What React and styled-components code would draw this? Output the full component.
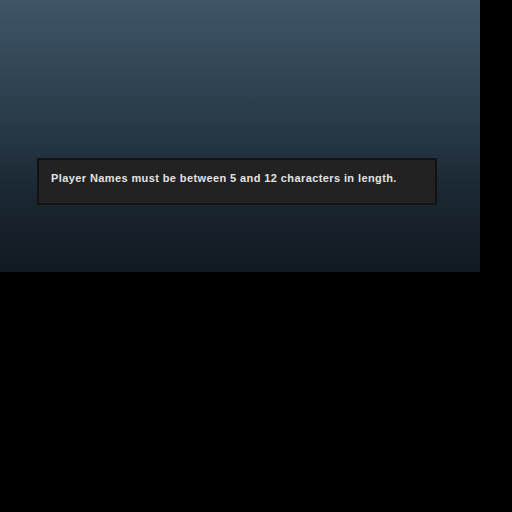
import React from "react";
import styled, { createGlobalStyle } from "styled-components";

const Global = createGlobalStyle`
  html, body { margin: 0; padding: 0; background: #000; }
  body { width: 512px; height: 512px; overflow: hidden; }
`;

const Screen = styled.div`
  width: 480px;
  height: 272px;
  background: linear-gradient(180deg, #3f5667 0%, #2c3e4c 40%, #1b2833 70%, #111820 100%);
  display: flex;
  flex-direction: column;
  padding-top: 158px;
  padding-left: 37px;
  box-sizing: border-box;
`;

const MessageBox = styled.div`
  width: 400px;
  height: 47px;
  box-sizing: border-box;
  background: #222222;
  border: 2px solid #131313;
  display: flex;
  align-items: flex-start;
  padding: 13px 0 0 12px;
`;

const Message = styled.span`
  font-family: "Liberation Sans", Arial, sans-serif;
  font-weight: bold;
  font-size: 11px;
  line-height: 11px;
  letter-spacing: 0.4px;
  color: #e2e2e2;
`;

export default function App() {
  return (
    <>
      <Global />
      <Screen>
        <MessageBox>
          <Message>Player Names must be between 5 and 12 characters in length.</Message>
        </MessageBox>
      </Screen>
    </>
  );
}
